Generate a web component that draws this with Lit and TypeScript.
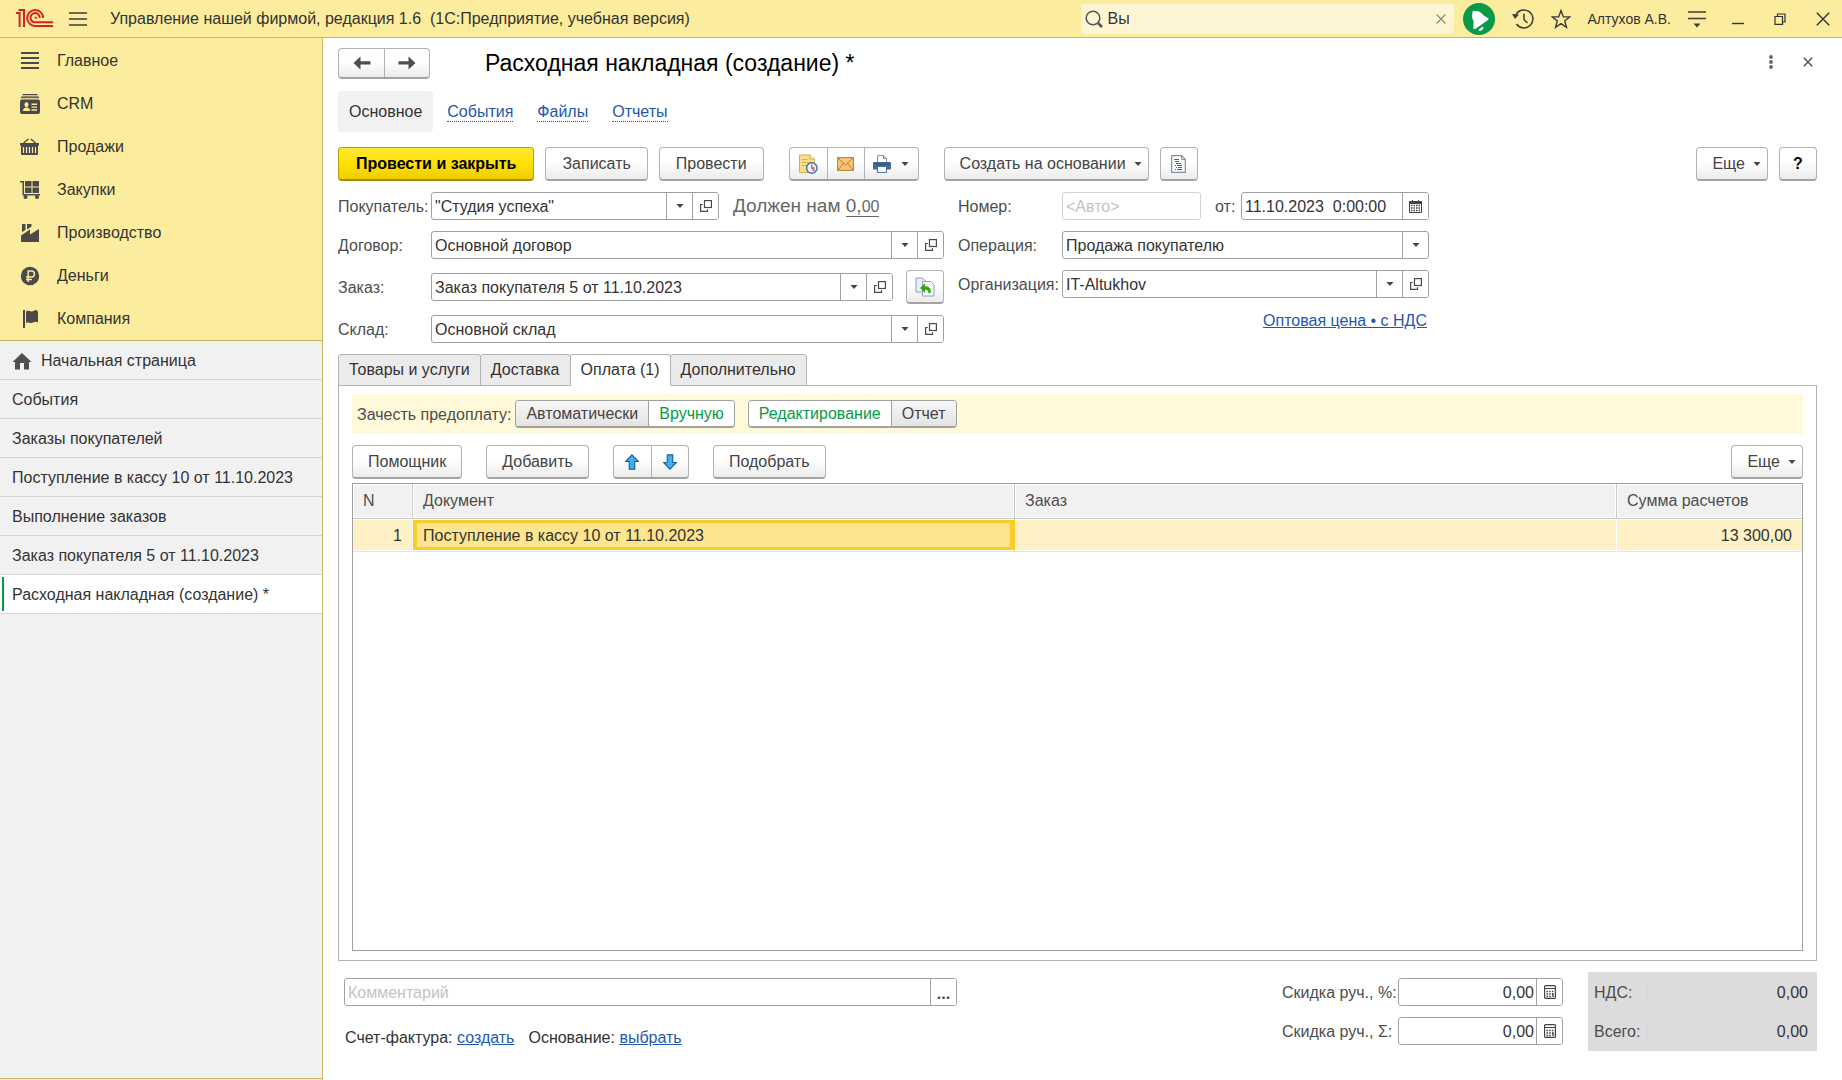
import { LitElement, html, svg, css, nothing, type TemplateResult } from "lit";
import { customElement, property, state } from "lit/decorators.js";
import { classMap } from "lit/directives/class-map.js";

interface Glyph {
  w: number;
  h: number;
  body: TemplateResult;
}

const GLYPHS: Record<string, Glyph> = {
  logo: {
    w: 38, h: 19,
    body: svg`<g fill="none" stroke="#d9211e" stroke-width="2">
      <path d="M0 4H3.6V18"/><path d="M2.6 1H8V18"/>
      <path d="M27.2 9A8 8 0 1 0 19.2 17H37"/>
      <path d="M23.7 9A4.6 4.6 0 1 0 19.2 13.3H37"/>
      <path d="M20.8 9.6A2 2 0 0 0 18.4 8.6" stroke-width="1.6"/></g>`,
  },
  burger: {
    w: 18, h: 14,
    body: svg`<path d="M0 1H18M0 7H18M0 13H18" stroke="#3c3c3c" stroke-width="1.6"/>`,
  },
  search: {
    w: 18, h: 18,
    body: svg`<circle cx="8" cy="8" r="6.8" fill="none" stroke="#555" stroke-width="1.5"/><path d="M13 13L17 17" stroke="#555" stroke-width="2.6"/>`,
  },
  clear: {
    w: 10, h: 10,
    body: svg`<path d="M.5 .5L9.5 9.5M9.5 .5L.5 9.5" stroke="#8d8768" stroke-width="1.1"/>`,
  },
  bell: {
    w: 32, h: 32,
    body: svg`<circle cx="16" cy="16" r="16" fill="#079a48"/>
      <path d="M9.6 9.4C9 8 11 7 12 8.2C15 7.6 18.5 9.5 20.2 12L25.4 15.6C26 16.4 25 17.2 24 17.7L12.5 25.7C11.3 26.4 10.2 26 10.3 25L10.7 18.5C9 15.5 8.6 12 9.6 9.4Z" fill="#fff"/>
      <path d="M16.2 26.5L19.7 24.2C20.3 26 19 27.5 16.2 27.5Z" fill="#fff" stroke="#fff"/>`,
  },
  history: {
    w: 22, h: 20,
    body: svg`<g fill="none" stroke="#3c3c3c" stroke-width="1.5"><path d="M3.6 6.5A9 9 0 1 1 4.5 15"/><path d="M12 4.8V10.5L15.5 14"/></g><path d="M0 5L7 5.5L3 10Z" fill="#3c3c3c"/>`,
  },
  star: {
    w: 20, h: 20,
    body: svg`<path d="M10 1.5L12.3 7.7L18.8 7.9L13.7 11.9L15.5 18.3L10 14.6L4.5 18.3L6.3 11.9L1.2 7.9L7.7 7.7Z" fill="none" stroke="#3c3c3c" stroke-width="1.4"/>`,
  },
  settings: {
    w: 18, h: 18,
    body: svg`<path d="M0 2H18M0 8.5H18" stroke="#3c3c3c" stroke-width="1.5"/><path d="M5.5 13.5H12.5L9 17.5Z" fill="#3c3c3c"/>`,
  },
  minimize: { w: 12, h: 12, body: svg`<path d="M0 10.5H12" stroke="#333" stroke-width="1.4"/>` },
  restore: {
    w: 12, h: 12,
    body: svg`<g fill="none" stroke="#333" stroke-width="1.2"><path d="M1 3.5H8.5V11.3H1Z"/><path d="M3.5 3.5V1H11V9H8.5"/></g>`,
  },
  close: { w: 14, h: 14, body: svg`<path d="M.8 .8L13.2 13.2M13.2 .8L.8 13.2" stroke="#333" stroke-width="1.4"/>` },
  closeSmall: { w: 10, h: 10, body: svg`<path d="M.8 .8L9.2 9.2M9.2 .8L.8 9.2" stroke="#555" stroke-width="1.5"/>` },
  dots: {
    w: 4, h: 14,
    body: svg`<g fill="#666"><circle cx="2" cy="2" r="1.9"/><circle cx="2" cy="7" r="1.9"/><circle cx="2" cy="12" r="1.9"/></g>`,
  },
  main: {
    w: 20, h: 20,
    body: svg`<path d="M1 2H19M1 7H19M1 12H19M1 17H19" stroke="#4a4a4a" stroke-width="2"/>`,
  },
  crm: {
    w: 20, h: 20,
    body: svg`<g fill="#4a4a4a"><path d="M3 0H17L18 1.3H2Z"/><path d="M1.5 2.3H18.5L19.5 4.3H.5Z" opacity=".8"/><rect x="0" y="5.5" width="20" height="14.5" rx="2"/></g>
      <g fill="#fbec9e"><ellipse cx="6.5" cy="10.6" rx="2" ry="2.6"/><path d="M2.8 17C2.8 14.5 5 13.5 6.5 13.5S10.2 14.5 10.2 17Z"/><path d="M11.5 9.5H17V10.9H11.5ZM11.5 12.4H17V13.8H11.5ZM11.5 15.3H17V16.7H11.5Z"/></g>`,
  },
  basket: {
    w: 20, h: 20,
    body: svg`<g fill="#4a4a4a"><path d="M0 6H19V8.5H0Z"/><path d="M1 8H18V17Q18 18 17 18H2Q1 18 1 17Z"/></g>
      <path d="M3.5 6L8.5 2M15.5 6L10.8 2" stroke="#4a4a4a" stroke-width="1.3"/>
      <path d="M3.5 10V16M6.5 10V16M9.5 10V16M12.5 10V16M15.5 10V16" stroke="#fbec9e" stroke-width="1.2"/>`,
  },
  cart: {
    w: 20, h: 20,
    body: svg`<g fill="#4a4a4a"><path d="M0 1H4V14H20V15.5H2.5V2.5H0Z"/><rect x="5" y="1" width="6.5" height="5.5"/><rect x="12.5" y="1" width="6.5" height="5.5"/><rect x="5" y="7.5" width="6.5" height="5.5"/><rect x="12.5" y="7.5" width="6.5" height="5.5"/><circle cx="5.5" cy="17" r="2"/><circle cx="17" cy="17" r="2"/></g>`,
  },
  factory: {
    w: 20, h: 20,
    body: svg`<g fill="#4a4a4a"><path d="M1 19V12.5L10 6.5V11.5L19 6V19Z"/><path d="M2 1H5.5V6.8L2 9.2ZM7 1H11.5V3.5L7 6.5Z"/></g>`,
  },
  ruble: {
    w: 20, h: 20,
    body: svg`<circle cx="10" cy="10" r="9.2" fill="#4a4a4a"/><path d="M8.2 16V5H11.5A2.9 2.9 0 0 1 11.5 10.9H6M6 13.5H12" fill="none" stroke="#fbec9e" stroke-width="1.5"/>`,
  },
  flag: {
    w: 20, h: 20,
    body: svg`<g fill="#4a4a4a"><path d="M3 1H5V19H3Z"/><path d="M6 2.5C8 1 9.5 2.5 11.5 2.5S14.5 1 15.5 1Q18 1.5 18 3V13.5C15 11.5 13.5 14 11 14S8 13 6 14Z"/></g>`,
  },
  home: {
    w: 20, h: 17,
    body: svg`<path d="M10 0L19.5 9H17V16.5H12V10H8V16.5H3V9H.5Z" fill="#4f4f4f"/>`,
  },
  back: { w: 18, h: 14, body: svg`<path d="M7.5 .5V5.2H17.5V8.4H7.5V13.5L.5 7Z" fill="#4d4d4d"/>` },
  forward: { w: 18, h: 14, body: svg`<path d="M10.5 .5V5.2H.5V8.4H10.5V13.5L17.5 7Z" fill="#4d4d4d"/>` },
  caret: { w: 8, h: 4, body: svg`<path d="M.5 0H7.5L4 4Z" fill="#444"/>` },
  open: {
    w: 12, h: 12,
    body: svg`<g fill="none" stroke="#4a4a4a" stroke-width="1.2"><rect x="4.5" y=".6" width="6.9" height="6.9"/><path d="M2.8 4.5H.6V11.4H7.5V9.3"/></g>`,
  },
  postpone: {
    w: 20, h: 20,
    body: svg`<path d="M1.5 1H12L16.5 5V18.5H1.5Z" fill="#f8dd8b" stroke="#d2ae54"/><path d="M12 1V5H16.5" fill="#fff2c4" stroke="#d2ae54"/><path d="M4 5.5H9.5M4 8.5H13M4 11.5H9" stroke="#d2ae54"/>
      <circle cx="13.8" cy="14" r="5.2" fill="#eaf1f8" stroke="#4d74a3" stroke-width="1.5"/><path d="M13.8 10.5V14H17" fill="none" stroke="#4d74a3" stroke-width="1.2"/><path d="M14 14L16.3 16.8" stroke="#d1473b" stroke-width="1.3"/>`,
  },
  mail: {
    w: 17, h: 14,
    body: svg`<rect x=".6" y=".6" width="15.8" height="12.8" fill="#f8c778" stroke="#c28a3e" stroke-width="1.2"/><path d="M1 1L8.5 8L16 1M1 13L6.5 6.2M16 13L10.5 6.2" fill="none" stroke="#b9762a"/>`,
  },
  print: {
    w: 18, h: 18,
    body: svg`<path d="M4.5 8V.6H10.5L13.5 3.6V8Z" fill="#fff" stroke="#7d90a5"/><path d="M10.5 .6V3.6H13.5" fill="none" stroke="#7d90a5"/><rect x="0" y="7" width="18" height="7.5" rx="1" fill="#426b98"/><path d="M2 9.2H16" stroke="#294a71"/><path d="M4.5 11.5H13.5V17.4H4.5Z" fill="#fff" stroke="#426b98"/>`,
  },
  list: {
    w: 15, h: 18,
    body: svg`<path d="M.7 .7H10.5L14.3 4.5V17.3H.7Z" fill="#fff" stroke="#7a8ca6" stroke-width="1.2"/><path d="M10.5 .7V4.5H14.3Z" fill="#d9e1ea" stroke="#7a8ca6" stroke-width=".9"/><path d="M3 4.5H8M4 6.5H8M5 8.500H10M4 10.5H5M6 10.5H11M5 12.5H6M7 12.5H11M4 14.5H5M6 14.5H11" stroke="#4b5f8b"/>`,
  },
  fill: {
    w: 20, h: 20,
    body: svg`<path d="M1 1H7.5L10.5 4V15H1Z" fill="#eaf0f5" stroke="#8ba0b4"/><path d="M7.5 4.5H15.5L19 8V19H7.500Z" fill="#fff" stroke="#8ba0b4"/><path d="M5 11L10 6V9.2C14.5 9.2 16.2 11.5 15.8 16H13.2C13.5 13.5 12.8 12.7 10 12.7V16Z" fill="#36a612"/>`,
  },
  up: { w: 14, h: 16, body: svg`<path d="M7 .8L13.3 7.5H9.7V15.2H4.3V7.5H.7Z" fill="#44aeee" stroke="#17659f" stroke-width="1.2"/>` },
  down: { w: 14, h: 16, body: svg`<path d="M7 15.2L13.3 8.5H9.7V.8H4.3V8.5H.7Z" fill="#44aeee" stroke="#17659f" stroke-width="1.2"/>` },
  calendar: {
    w: 13, h: 13,
    body: svg`<path d="M1 1H3V0H4V1H9V0H10V1H12Q13 1 13 2V12Q13 13 12 13H1Q0 13 0 12V2Q0 1 1 1Z" fill="#444"/><path d="M1 4H12V12H1Z" fill="#fff"/><path d="M2 5.5H11M2 8H11M2 10.5H11" stroke="#444" stroke-width="1.400" stroke-dasharray="1.5 1"/>`,
  },
  calc: {
    w: 12, h: 14,
    body: svg`<rect x=".6" y=".6" width="10.8" height="12.8" rx="1" fill="#fff" stroke="#444" stroke-width="1.2"/><path d="M1 3.5H11" stroke="#444"/><path d="M2.5 6.5H9.5M2.5 9H9.5M2.5 11.5H7" stroke="#444" stroke-width="1.3" stroke-dasharray="1.500 1.200"/><path d="M9 8.5V12" stroke="#444" stroke-width="1.4"/>`,
  },
};

const icon = (name: string) => {
  const g = GLYPHS[name];
  return html`<svg class="icon" width=${g.w} height=${g.h} viewBox="0 0 ${g.w} ${g.h}" aria-hidden="true">${g.body}</svg>`;
};

const base = css`
  * { box-sizing: border-box; }
  button, input, select { font: inherit; color: inherit; margin: 0; }
  button { cursor: pointer; }
  .icon { display: block; flex: none; }
  a { color: #1f57b4; }
`;

/** Text box with a border shared by its trailing buttons. */
@customElement("entry-field")
export class EntryField extends LitElement {
  static styles = [base, css`
    :host { display: block; min-width: 0; }
    .row { display: flex; align-items: center; height: 100%; }
    label { flex: none; width: var(--label, auto); padding-top: 2px; white-space: nowrap; color: #4d4d4d; }
    .box { display: flex; flex: 1; min-width: 0; height: 28px; border: 1px solid #a0a0a0; border-radius: 3px; background: #fff; overflow: hidden; }
    .box.muted { border-color: #d2d2d2; }
    .box.flat { background: transparent; border-color: #d8d8d8; }
    input { flex: 1; min-width: 0; width: 0; border: 0; outline: 0; padding: 2px 3px 0; background: transparent; color: #333; }
    input.right { text-align: right; padding: 2px 2px 0; }
    input::placeholder { color: #c3c3c3; opacity: 1; }
    button { display: flex; align-items: center; justify-content: center; flex: none; width: 26px; padding: 0; border: 0; border-left: 1px solid #a0a0a0; background: #fff; }
    button.more { padding-top: 4px; font-weight: bold; }
  `];
  @property() label = "";
  @property() hint = "";
  @property() value = "";
  @property() placeholder = "";
  @property() actions = "";
  @property() look = "";
  @property({ type: Boolean }) right = false;
  @property({ type: Boolean, attribute: "read-only" }) readOnly = false;

  private names: Record<string, string> = { caret: "Выбрать из списка", open: "Открыть", calendar: "Календарь", calc: "Калькулятор", more: "Изменить" };

  render() {
    return html`<div class="row">
      ${this.label ? html`<label for="field">${this.label}</label>` : nothing}
      <div class="box ${this.look}">
        <input id="field" class=${classMap({ right: this.right })} .value=${this.value}
          placeholder=${this.placeholder} ?readonly=${this.readOnly}
          aria-label=${this.label ? nothing : this.hint}>
        ${this.actions.split(" ").filter(Boolean).map((a) => html`
          <button type="button" class=${a} aria-label=${this.names[a]}>${a === "more" ? "..." : icon(a)}</button>`)}
      </div>
    </div>`;
  }
}

@customElement("app-header")
export class AppHeader extends LitElement {
  static styles = [base, css`
    :host { display: block; background: #fbec9e; border-bottom: 1px solid #c5b763; }
    header { display: flex; align-items: center; height: 37px; padding: 0 12px 0 16px; color: #333; }
    button { display: flex; align-items: center; justify-content: center; padding: 0; border: 0; background: none; height: 32px; }
    .burger { margin: 0 23px 0 15px; }
    .title { flex: 1; white-space: pre; overflow: hidden; }
    .search { display: flex; align-items: center; flex: 0 1 373px; height: 30px; padding: 0 8px 0 4px; gap: 3px; margin-right: 9px; border-radius: 3px; background: #fdf5d3; }
    .search input { flex: 1; min-width: 0; border: 0; outline: 0; background: none; }
    .tools { display: flex; align-items: center; gap: 17px; }
    .user { font-size: 14px; white-space: nowrap; }
    .window { display: flex; gap: 30px; margin-left: 26px; }
  `];
  render() {
    return html`<header>
      ${icon("logo")}
      <button class="burger" aria-label="Меню">${icon("burger")}</button>
      <span class="title">Управление нашей фирмой, редакция 1.6  (1С:Предприятие, учебная версия)</span>
      <div class="search">
        ${icon("search")}
        <input aria-label="Поиск" .value=${"Вы"}>
        <button aria-label="Очистить">${icon("clear")}</button>
      </div>
      <div class="tools">
        <button aria-label="Уведомления">${icon("bell")}</button>
        <button aria-label="История">${icon("history")}</button>
        <button aria-label="Избранное">${icon("star")}</button>
        <span class="user">Алтухов А.В.</span>
        <button aria-label="Настройки">${icon("settings")}</button>
      </div>
      <div class="window">
        <button aria-label="Свернуть">${icon("minimize")}</button>
        <button aria-label="Восстановить">${icon("restore")}</button>
        <button aria-label="Закрыть">${icon("close")}</button>
      </div>
    </header>`;
  }
}

@customElement("app-sidebar")
export class AppSidebar extends LitElement {
  static styles = [base, css`
    :host { display: flex; flex-direction: column; background: #f1f1f1; border-right: 1px solid #c5b763; }
    a { display: flex; align-items: center; padding-top: 2px; color: #333; text-decoration: none; white-space: nowrap; }
    .sections { background: #fbec9e; border-bottom: 1px solid #c5b763; padding-bottom: 1px; }
    .sections a { height: 43px; padding-left: 20px; gap: 17px; }
    .windows { flex: 1; }
    .windows a { height: 39px; padding-left: 12px; gap: 9px; border-bottom: 1px solid #d6d6d6; }
    .windows a.current { position: relative; background: #fff; }
    .windows a.current::before { content: ""; position: absolute; left: 2px; top: 2px; bottom: 2px; width: 2px; background: #079a48; }
    .edge { height: 2px; background: #fbec9e; border-top: 1px solid #c5b763; }
  `];
  private sections = [["main", "Главное"], ["crm", "CRM"], ["basket", "Продажи"], ["cart", "Закупки"], ["factory", "Производство"], ["ruble", "Деньги"], ["flag", "Компания"]];
  private windows = ["Начальная страница", "События", "Заказы покупателей", "Поступление в кассу 10 от 11.10.2023", "Выполнение заказов", "Заказ покупателя 5 от 11.10.2023", "Расходная накладная (создание) *"];
  render() {
    return html`
      <nav class="sections">${this.sections.map(([i, t]) => html`<a href="#">${icon(i)}<span>${t}</span></a>`)}</nav>
      <nav class="windows">${this.windows.map((t, i, all) => html`
        <a href="#" class=${classMap({ current: i === all.length - 1 })}>${i === 0 ? icon("home") : nothing}<span>${t}</span></a>`)}
      </nav>
      <div class="edge"></div>`;
  }
}

@customElement("invoice-form")
export class InvoiceForm extends LitElement {
  static styles = [base, css`
    :host { display: flex; flex-direction: column; min-width: 0; padding: 10px 25px 29px 15px; background: #fff; color: #4d4d4d; }
    .btn, .group { border: 1px solid #b3b3b3; border-bottom: 2px solid #a3a3a3; border-radius: 4px; background: linear-gradient(#fff 45%, #ebebeb); }
    .btn { display: flex; align-items: center; justify-content: center; height: 34px; padding: 0 16px; white-space: nowrap; color: #444; }
    .btn.drop { gap: 8px; padding: 0 6px 0 15px; }
    .btn.square { width: 38px; padding: 0; }
    .btn.help { color: #000; font-weight: bold; }
    .btn.primary { padding: 0 17px; font-weight: bold; color: #000; border-color: #b5a000; border-bottom-color: #a08c00; background: linear-gradient(#ffe838, #ffe000 50%, #efce00); }
    .group { display: flex; height: 34px; }
    .group button { display: flex; align-items: center; justify-content: center; gap: 10px; width: 37px; padding: 0; border: 0; background: none; }
    .group button + button { border-left: 1px solid #b3b3b3; }
    .group button.wide { width: 54px; }
    .spacer { flex: 1; }

    .top { display: flex; align-items: center; height: 31px; }
    .top .group { height: 31px; }
    .top .group button { width: 45px; }
    h1 { flex: 1; margin: 0 0 0 55px; padding-bottom: 2px; font-size: 23px; font-weight: normal; color: #000; white-space: nowrap; }
    .plain { display: flex; border: 0; padding: 4px 4px 8px; background: none; }
    .plain + .plain { margin-left: 22px; }

    .links { display: flex; align-items: center; gap: 24px; height: 41px; margin: 12px 0 15px; }
    .links a { text-decoration: none; border-bottom: 1px dotted #1f57b4; margin-top: 2px; }
    .links a.on { display: flex; align-items: center; height: 41px; padding: 0 11px; margin: 0 -10px 0 0; border: 0; border-radius: 4px; background: #f1f1f1; color: #333; }

    .commands { display: flex; gap: 11px; }
    .commands .apart { margin-left: 14px; }

    .fields { display: grid; grid-template-columns: minmax(0, 606fr) minmax(0, 471fr) minmax(0, 374fr); column-gap: 14px; margin: 11px 0; }
    .left, .rightside { display: flex; flex-direction: column; gap: 11px; }
    .left { --label: 93px; }
    .rightside { --label: 104px; }
    .line { display: flex; align-items: center; }
    .line entry-field { flex: 1; }
    .debt { flex: none; width: 225px; padding-left: 14px; font-size: 19px; color: #666; white-space: nowrap; }
    .debt a { color: inherit; text-decoration: none; border-bottom: 1px solid #666; }
    .debt small { font-size: 16px; }
    .order { gap: 13px; }
    .num { gap: 14px; }
    .num .auto { flex: 243; }
    .num .date { flex: 214; --label: 26px; }
    .pick { display: flex; align-items: center; }
    .pick label { flex: none; width: 104px; padding-top: 2px; }
    .pick div { display: grid; flex: 1; grid-template-columns: 1fr 26px; height: 28px; border: 1px solid #a0a0a0; border-radius: 3px; overflow: hidden; }
    .pick select { grid-area: 1 / 1 / 2 / 3; appearance: none; border: 0; background: none; padding: 2px 3px 0; color: #333; outline: 0; }
    .pick span { grid-area: 1 / 2; display: flex; align-items: center; justify-content: center; border-left: 1px solid #a0a0a0; pointer-events: none; }
    .price { align-self: flex-end; line-height: 24px; margin-right: 2px; }

    .tabs { display: flex; margin-bottom: -1px; }
    .tabs button { height: 32px; padding: 0 10px; margin-right: -1px; border: 1px solid #b3b3b3; background: #ebebeb; color: #333; border-radius: 3px 3px 0 0; white-space: nowrap; }
    .tabs button.on { z-index: 1; background: #fff; border-bottom-color: #fff; }
    .panel { display: flex; flex: 1; flex-direction: column; padding: 8px 13px 9px; border: 1px solid #b3b3b3; }
    .prepay { display: flex; align-items: center; height: 40px; padding: 0 5px; background: #fff9da; }
    fieldset { display: flex; align-items: center; margin: 0 13px 0 0; padding: 0; border: 0; }
    .seg { display: flex; height: 28px; border: 1px solid #a0a0a0; border-bottom-width: 2px; border-radius: 4px; overflow: hidden; background: #fff; }
    .seg label { display: flex; align-items: center; padding: 0 10px; color: #444; background: linear-gradient(#f6f6f6, #e4e4e4); cursor: pointer; }
    .seg label + label { border-left: 1px solid #a0a0a0; }
    .seg label.on { color: #079a48; background: #fff; }
    .seg input { appearance: none; width: 0; height: 0; }
    .cap { margin-right: 4px; padding-top: 2px; }
    .bar { display: flex; gap: 24px; margin: 11px 0 4px; }
    .bar > .btn:not(.drop) { padding: 0 15px; }

    .grid { flex: 1; border: 1px solid #a0a0a0; }
    table { width: 100%; table-layout: fixed; border-collapse: separate; border-spacing: 0; }
    .n { width: 60px; }
    .sum { width: 185px; }
    th { height: 35px; padding: 0 9px 0 10px; text-align: left; font-weight: normal; background: #f1f1f1; border-right: 1px solid #c9c9c9; border-bottom: 1px solid #c9c9c9; box-shadow: inset 0 0 0 1px #fff; }
    th:last-child, td:last-child { border-right: 0; }
    td { height: 33px; padding: 2px 10px 0; color: #333; background: #fef1c5; border-right: 1px solid #fff; border-bottom: 1px solid #e3e3e3; box-shadow: inset 0 1px #fff, inset 0 -1px #fff; }
    td.r { text-align: right; }
    td.cur { background: #fde48e; box-shadow: inset 0 1px #fff, inset 0 -1px #fff, inset 0 0 0 4px #fccb25; border-right-color: #fccb25; }

    footer { display: flex; align-items: flex-start; margin-top: 11px; }
    .notes { flex: 0 1 613px; margin: 6px auto 0 6px; }
    .notes p { display: flex; gap: 14px; margin: 23px 0 0 1px; color: #333; }
    .discount { display: flex; flex: 0 1 281px; flex-direction: column; gap: 11px; margin: 6px 25px 0 0; --label: 116px; }
    .totals { display: flex; flex: 0 1 229px; flex-direction: column; gap: 11px; padding: 6px 6px 6px 6px; background: #dcdcdc; --label: 53px; }
  `];

  @state() private tab = 2;
  @state() private offset = 1;
  @state() private mode = 0;

  private segment(name: string, items: string[], active: number, pick: (i: number) => void) {
    return html`<div class="seg">${items.map((t, i) => html`
      <label class=${classMap({ on: i === active })}><input type="radio" name=${name} .checked=${i === active} @change=${() => pick(i)}>${t}</label>`)}</div>`;
  }

  render() {
    const tabs = ["Товары и услуги", "Доставка", "Оплата (1)", "Дополнительно"];
    return html`
      <div class="top">
        <div class="group">
          <button aria-label="Назад">${icon("back")}</button>
          <button aria-label="Вперед">${icon("forward")}</button>
        </div>
        <h1>Расходная накладная (создание) *</h1>
        <button class="plain" aria-label="Действия">${icon("dots")}</button>
        <button class="plain" aria-label="Закрыть форму">${icon("closeSmall")}</button>
      </div>
      <nav class="links">
        <a href="#" class="on">Основное</a><a href="#">События</a><a href="#">Файлы</a><a href="#">Отчеты</a>
      </nav>
      <div class="commands">
        <button class="btn primary">Провести и закрыть</button>
        <button class="btn">Записать</button>
        <button class="btn">Провести</button>
        <div class="group apart">
          <button aria-label="Отложить">${icon("postpone")}</button>
          <button aria-label="Отправить">${icon("mail")}</button>
          <button class="wide" aria-label="Печать">${icon("print")}${icon("caret")}</button>
        </div>
        <button class="btn drop apart">Создать на основании${icon("caret")}</button>
        <button class="btn square" aria-label="Отчет">${icon("list")}</button>
        <span class="spacer"></span>
        <button class="btn drop">Еще${icon("caret")}</button>
        <button class="btn square help">?</button>
      </div>

      <div class="fields">
        <div class="left">
          <div class="line">
            <entry-field label="Покупатель:" value='"Студия успеха"' actions="caret open"></entry-field>
            <span class="debt">Должен нам <a href="#">0,<small>00</small></a></span>
          </div>
          <entry-field label="Договор:" value="Основной договор" actions="caret open"></entry-field>
          <div class="line order">
            <entry-field label="Заказ:" value="Заказ покупателя 5 от 11.10.2023" actions="caret open"></entry-field>
            <button class="btn square" aria-label="Заполнить по заказу">${icon("fill")}</button>
          </div>
          <entry-field label="Склад:" value="Основной склад" actions="caret open"></entry-field>
        </div>
        <div class="rightside">
          <div class="line num">
            <entry-field class="auto" label="Номер:" placeholder="<Авто>" look="muted"></entry-field>
            <entry-field class="date" label="от:" value="11.10.2023  0:00:00" actions="calendar"></entry-field>
          </div>
          <div class="pick">
            <label for="operation">Операция:</label>
            <div><select id="operation"><option>Продажа покупателю</option></select><span>${icon("caret")}</span></div>
          </div>
          <entry-field label="Организация:" value="IT-Altukhov" actions="caret open"></entry-field>
          <a class="price" href="#">Оптовая цена • с НДС</a>
        </div>
      </div>

      <div class="tabs" role="tablist">${tabs.map((t, i) => html`
        <button role="tab" aria-selected=${i === this.tab ? "true" : "false"} class=${classMap({ on: i === this.tab })} @click=${() => (this.tab = i)}>${t}</button>`)}
      </div>
      <section class="panel">
        <div class="prepay">
          <fieldset><span class="cap">Зачесть предоплату:</span>
            ${this.segment("offset", ["Автоматически", "Вручную"], this.offset, (i) => (this.offset = i))}</fieldset>
          <fieldset>${this.segment("mode", ["Редактирование", "Отчет"], this.mode, (i) => (this.mode = i))}</fieldset>
        </div>
        <div class="bar">
          <button class="btn">Помощник</button>
          <button class="btn">Добавить</button>
          <div class="group">
            <button aria-label="Вверх">${icon("up")}</button>
            <button aria-label="Вниз">${icon("down")}</button>
          </div>
          <button class="btn">Подобрать</button>
          <span class="spacer"></span>
          <button class="btn drop">Еще${icon("caret")}</button>
        </div>
        <div class="grid">
          <table>
            <thead><tr><th class="n">N</th><th>Документ</th><th>Заказ</th><th class="sum">Сумма расчетов</th></tr></thead>
            <tbody><tr><td class="r">1</td><td class="cur">Поступление в кассу 10 от 11.10.2023</td><td></td><td class="r">13 300,00</td></tr></tbody>
          </table>
        </div>
      </section>

      <footer>
        <div class="notes">
          <entry-field hint="Комментарий" placeholder="Комментарий" actions="more"></entry-field>
          <p><span>Счет-фактура: <a href="#">создать</a></span><span>Основание: <a href="#">выбрать</a></span></p>
        </div>
        <div class="discount">
          <entry-field label="Скидка руч., %:" value="0,00" right actions="calc"></entry-field>
          <entry-field label="Скидка руч., Σ:" value="0,00" right actions="calc"></entry-field>
        </div>
        <div class="totals">
          <entry-field label="НДС:" value="0,00" right read-only look="flat"></entry-field>
          <entry-field label="Всего:" value="0,00" right read-only look="flat"></entry-field>
        </div>
      </footer>`;
  }
}

@customElement("app-root")
export class AppRoot extends LitElement {
  static styles = css`
    :host { display: grid; grid-template: auto 1fr / 323px minmax(0, 1fr); min-height: 100vh; font: 16px/18px "Liberation Sans", Arial, sans-serif; }
    app-header { grid-column: 1 / -1; }
  `;
  render() {
    return html`<app-header></app-header><app-sidebar></app-sidebar><invoice-form></invoice-form>`;
  }
}
